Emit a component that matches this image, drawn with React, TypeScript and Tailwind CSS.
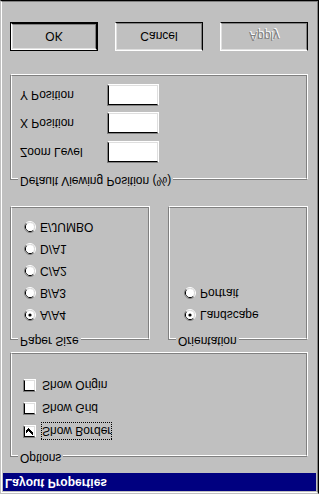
import type { ReactNode } from "react"

// pixel columns of the classic 7x7 check glyph (x, first row)
const CHECK_COLUMNS = [
    [0, 2], [1, 3], [2, 4], [3, 3], [4, 2], [5, 1], [6, 0],
]

function GroupBox({ legend, className, children }: { legend: string, className: string, children?: ReactNode }) {
    return <div className={`relative border border-t-[#808080] border-l-[#808080] border-r-white border-b-white ${className}`}>
        <div className="h-full border border-t-white border-l-white border-r-[#808080] border-b-[#808080]">
            {children}
        </div>
        {/* legend sits over the etched top line */}
        <span className="absolute left-[7px] top-[-9px] bg-[#c0c0c0] px-[2px] leading-[14px] whitespace-nowrap">{legend}</span>
    </div>
}

function Radio({ checked }: { checked?: boolean }) {
    return <svg width="12" height="12" viewBox="0 0 12 12" className="shrink-0">
        <path d="M2.11 9.89 A5.5 5.5 0 0 1 9.89 2.11" fill="none" stroke="#808080" />
        <path d="M9.89 2.11 A5.5 5.5 0 0 1 2.11 9.89" fill="none" stroke="#ffffff" />
        <path d="M2.82 9.18 A4.5 4.5 0 0 1 9.18 2.82" fill="none" stroke="#000000" />
        <path d="M9.18 2.82 A4.5 4.5 0 0 1 2.82 9.18" fill="none" stroke="#dfdfdf" />
        <circle cx="6" cy="6" r="4" fill="#ffffff" />
        {checked && <circle cx="6" cy="6" r="1.6" fill="#000000" />}
    </svg>
}

function RadioRow({ label, checked }: { label: string, checked?: boolean }) {
    return <div className="h-[22px] flex items-center gap-[4px]">
        <Radio checked={checked} />
        <span>{label}</span>
    </div>
}

function CheckRow({ label, checked, focused }: { label: string, checked?: boolean, focused?: boolean }) {
    return <div className="h-[23px] flex items-center gap-[5px]">
        <div className="w-[13px] h-[13px] shrink-0 border border-t-[#808080] border-l-[#808080] border-r-white border-b-white">
            <div className="h-full border border-t-black border-l-black border-r-[#dfdfdf] border-b-[#dfdfdf] bg-white">
                {checked && <svg width="9" height="9" viewBox="0 0 9 9" className="block">
                    {CHECK_COLUMNS.map(([x, y]) => <rect key={x} x={x + 1} y={y + 1} width="1" height="3" fill="#000" />)}
                </svg>}
            </div>
        </div>
        <span className={`border border-dotted leading-[16px] ${focused ? "border-black" : "border-transparent"}`}>{label}</span>
    </div>
}

function Field({ label }: { label: string }) {
    return <div className="h-[22px] flex items-center pl-[8px]">
        <span className="w-[87px]">{label}</span>
        <div className="w-[52px] h-[22px] border border-t-[#808080] border-l-[#808080] border-r-white border-b-white">
            <div className="h-full border border-t-black border-l-black border-r-[#dfdfdf] border-b-[#dfdfdf] bg-white" />
        </div>
    </div>
}

function Button({ label, isDefault, disabled }: { label: string, isDefault?: boolean, disabled?: boolean }) {
    return <div className={`w-[88px] h-[29px] ${isDefault ? "border border-black" : ""}`}>
        <div className="h-full border border-t-white border-l-white border-r-black border-b-black">
            <div className={`h-full flex items-center justify-center border border-t-[#dfdfdf] border-l-[#dfdfdf] border-r-[#808080] border-b-[#808080] ${disabled ? "text-[#808080] [text-shadow:1px_1px_0_#ffffff]" : ""}`}>
                {label}
            </div>
        </div>
    </div>
}

export default function App() {
    // the whole dialog is shown mirrored top-to-bottom
    return <div className="w-[319px] h-[494px] -scale-y-100 bg-[#c0c0c0] text-black text-[12px] leading-[14px] font-['Liberation_Sans',Arial,sans-serif] border border-t-[#c0c0c0] border-l-[#c0c0c0] border-r-black border-b-black">
        <div className="h-full flex flex-col p-px border border-t-white border-l-white border-r-[#808080] border-b-[#808080]">
            {/* TITLE BAR */}
            <div className="h-[18px] shrink-0 bg-[#000080] text-white font-bold pl-[2px] leading-[17px]">Layout Properties</div>

            <div className="flex flex-col pl-[7px] pr-[8px]">
                <GroupBox legend="Options" className="mt-[16px] h-[105px]">
                    <div className="flex flex-col pt-[12px] pl-[11px]">
                        <CheckRow label="Show Border" checked focused />
                        <CheckRow label="Show Grid" />
                        <CheckRow label="Show Origin" />
                    </div>
                </GroupBox>

                <div className="mt-[12px] h-[134px] flex justify-between">
                    <GroupBox legend="Paper Size" className="w-[140px]">
                        <div className="flex flex-col pt-[12px] pl-[12px]">
                            <RadioRow label="A/A4" checked />
                            <RadioRow label="B/A3" />
                            <RadioRow label="C/A2" />
                            <RadioRow label="D/A1" />
                            <RadioRow label="E/JUMBO" />
                        </div>
                    </GroupBox>
                    <GroupBox legend="Orientation" className="w-[140px]">
                        <div className="flex flex-col pt-[12px] pl-[14px]">
                            <RadioRow label="Landscape" checked />
                            <RadioRow label="Portrait" />
                        </div>
                    </GroupBox>
                </div>

                <GroupBox legend="Default Viewing Position (%)" className="mt-[26px] h-[106px]">
                    <div className="flex flex-col pt-[15px]">
                        <Field label="Zoom Level" />
                        <div className="mt-[7px]"><Field label="X Position" /></div>
                        <div className="mt-[6px]"><Field label="Y Position" /></div>
                    </div>
                </GroupBox>

                {/* BUTTON ROW */}
                <div className="mt-[23px] flex justify-between">
                    <Button label="OK" isDefault />
                    <Button label="Cancel" />
                    <Button label="Apply" disabled />
                </div>
            </div>
        </div>
    </div>
}
